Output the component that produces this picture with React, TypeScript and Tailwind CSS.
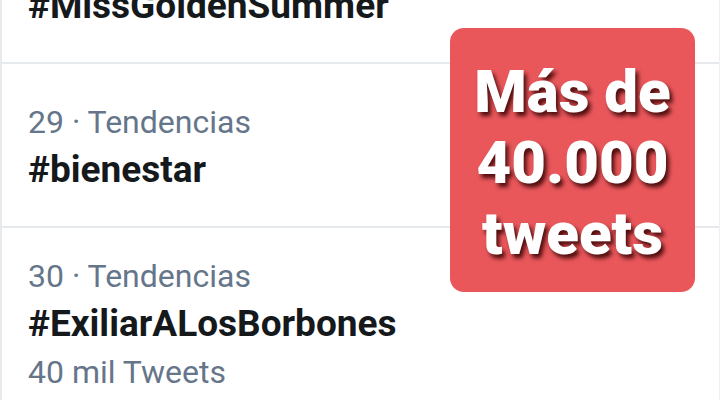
import React from 'react';

type Trend = {
    rank?: string;
    tag: string;
    count?: string;
};

const trends: Trend[] = [
    { tag: '#MissGoldenSummer' },
    { rank: '29', tag: '#bienestar' },
    { rank: '30', tag: '#ExiliarALosBorbones', count: '40 mil Tweets' },
];

const TrendRow: React.FC<{ trend: Trend; index: number }> = ({ trend, index }) => {
    // first row is scrolled mostly out of view
    if (index === 0) {
        return (
            <div className="h-[64px] overflow-hidden flex items-end pl-[26px] pb-[28px] border-b-2 border-[#e7eaec]">
                <p className="text-[37px] leading-[56px] font-bold text-[#15191c]">{trend.tag}</p>
            </div>
        );
    }
    return (
        <div className={`pl-[26px] ${index === 1 ? 'h-[164px] pt-[38px] border-b-2 border-[#e7eaec]' : 'pt-[28px]'}`}>
            <p className="text-[32px] leading-[40px] text-[#66768a]">{trend.rank} · Tendencias</p>
            <p className="text-[37px] leading-[56px] font-bold text-[#15191c]">{trend.tag}</p>
            {trend.count && (
                <p className="text-[32px] leading-[40px] text-[#66768a]">{trend.count}</p>
            )}
        </div>
    );
};

export default function App() {
    return (
        <div
            className="relative w-[720px] h-[400px] overflow-hidden bg-white border-l-2 border-[#e8ebed]"
            style={{ fontFamily: 'Roboto, "Noto Sans", sans-serif' }}
        >
            <div className="border-r border-[#eef0f2] h-full">
                {trends.map((t, i) => (
                    <TrendRow key={t.tag} trend={t} index={i} />
                ))}
            </div>

            {/* Overlay badge */}
            <div className="absolute left-[448px] top-[28px] w-[245px] h-[264px] rounded-[14px] bg-[#e9575b] flex flex-col items-center justify-center pt-1">
                {['Más de', '40.000', 'tweets'].map(line => (
                    <span
                        key={line}
                        className="text-white text-[60px] font-black leading-[71px] [text-shadow:3px_4px_4px_rgba(50,0,0,0.85)]"
                    >
                        {line}
                    </span>
                ))}
            </div>
        </div>
    );
}
